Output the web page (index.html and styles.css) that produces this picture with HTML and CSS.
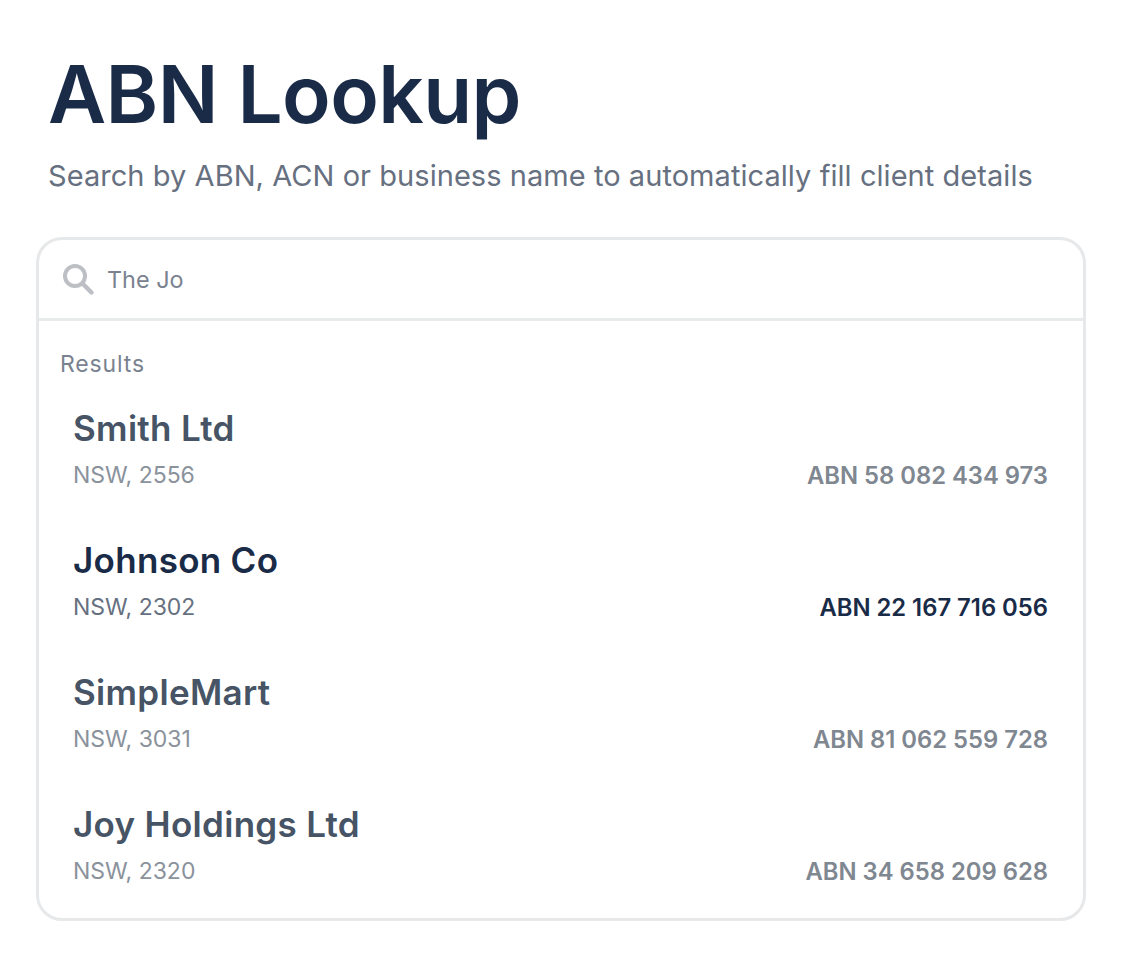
FILE: index.html
```html
<!DOCTYPE html>
<html>
<head>
	<title>ABN Lookup</title>
	<link rel="stylesheet" href="styles.css">
</head>
<body>
	<div class="page">
		<h1>ABN Lookup</h1>
		<p class="sub">Search by ABN, ACN or business name to automatically fill client details</p>
		<div class="card">
			<div class="search">
				<svg class="search-icon" width="34" height="34" viewBox="0 0 34 34" fill="none" stroke="#bcbfc3" stroke-linecap="round">
					<circle cx="14" cy="14" r="10" stroke-width="4"/>
					<path d="M21.5 21.5L30.5 30.5" stroke-width="4.4"/>
				</svg>
				<span class="query">The Jo</span>
			</div>
			<div class="results">
				<div class="results-label">Results</div>
				<div class="row">
					<div class="name">Smith Ltd</div>
					<div class="meta"><span>NSW, 2556</span><span class="abn">ABN 58 082 434 973</span></div>
				</div>
				<div class="row active">
					<div class="name">Johnson Co</div>
					<div class="meta"><span>NSW, 2302</span><span class="abn">ABN 22 167 716 056</span></div>
				</div>
				<div class="row">
					<div class="name">SimpleMart</div>
					<div class="meta"><span>NSW, 3031</span><span class="abn">ABN 81 062 559 728</span></div>
				</div>
				<div class="row">
					<div class="name">Joy Holdings Ltd</div>
					<div class="meta"><span>NSW, 2320</span><span class="abn">ABN 34 658 209 628</span></div>
				</div>
			</div>
		</div>
	</div>
</body>
</html>
```

FILE: styles.css
```css
body {
	margin: 0;
	background: #fff;
	font-family: Inter, "Liberation Sans", sans-serif;
}

.page {
	padding: 48px 36px 0 36px;
}

h1 {
	margin: 0 0 0 12px;
	font-size: 80px;
	line-height: 92px;
	font-weight: 600;
	letter-spacing: -0.6px;
	color: #1a2b48;
}

.sub {
	margin: 16px 0 0 12px;
	font-size: 29px;
	line-height: 40px;
	letter-spacing: 0.055px;
	color: #667080;
}

.card {
	margin-top: 41px;
	width: 1050px;
	border: 3px solid #e6e8ea;
	border-radius: 26px;
	box-sizing: border-box;
}

.search {
	display: flex;
	align-items: center;
	gap: 12px;
	height: 78px;
	padding-left: 22px;
	border-bottom: 3px solid #e8ebec;
}

.query {
	font-size: 23.4px;
	color: #7a8290;
}

.results {
	padding: 27px 35px 10px 21px;
}

.results-label {
	font-size: 23px;
	line-height: 32px;
	letter-spacing: 0.85px;
	color: #7a8290;
}

.row {
	height: 132px;
	padding: 0 0 0 13px;
}

.name {
	padding-top: 24px;
	font-size: 35px;
	line-height: 48px;
	font-weight: 600;
	letter-spacing: 0.3px;
	color: #465465;
}

.meta {
	display: flex;
	justify-content: space-between;
	margin-top: 8px;
	font-size: 23px;
	line-height: 31px;
	color: #8a929c;
}

.abn {
	font-size: 23.8px;
	font-weight: 600;
	color: #7f8791;
}

.active .name,
.active .abn {
	color: #1a2b48;
}

.active .meta {
	color: #667080;
}
```
